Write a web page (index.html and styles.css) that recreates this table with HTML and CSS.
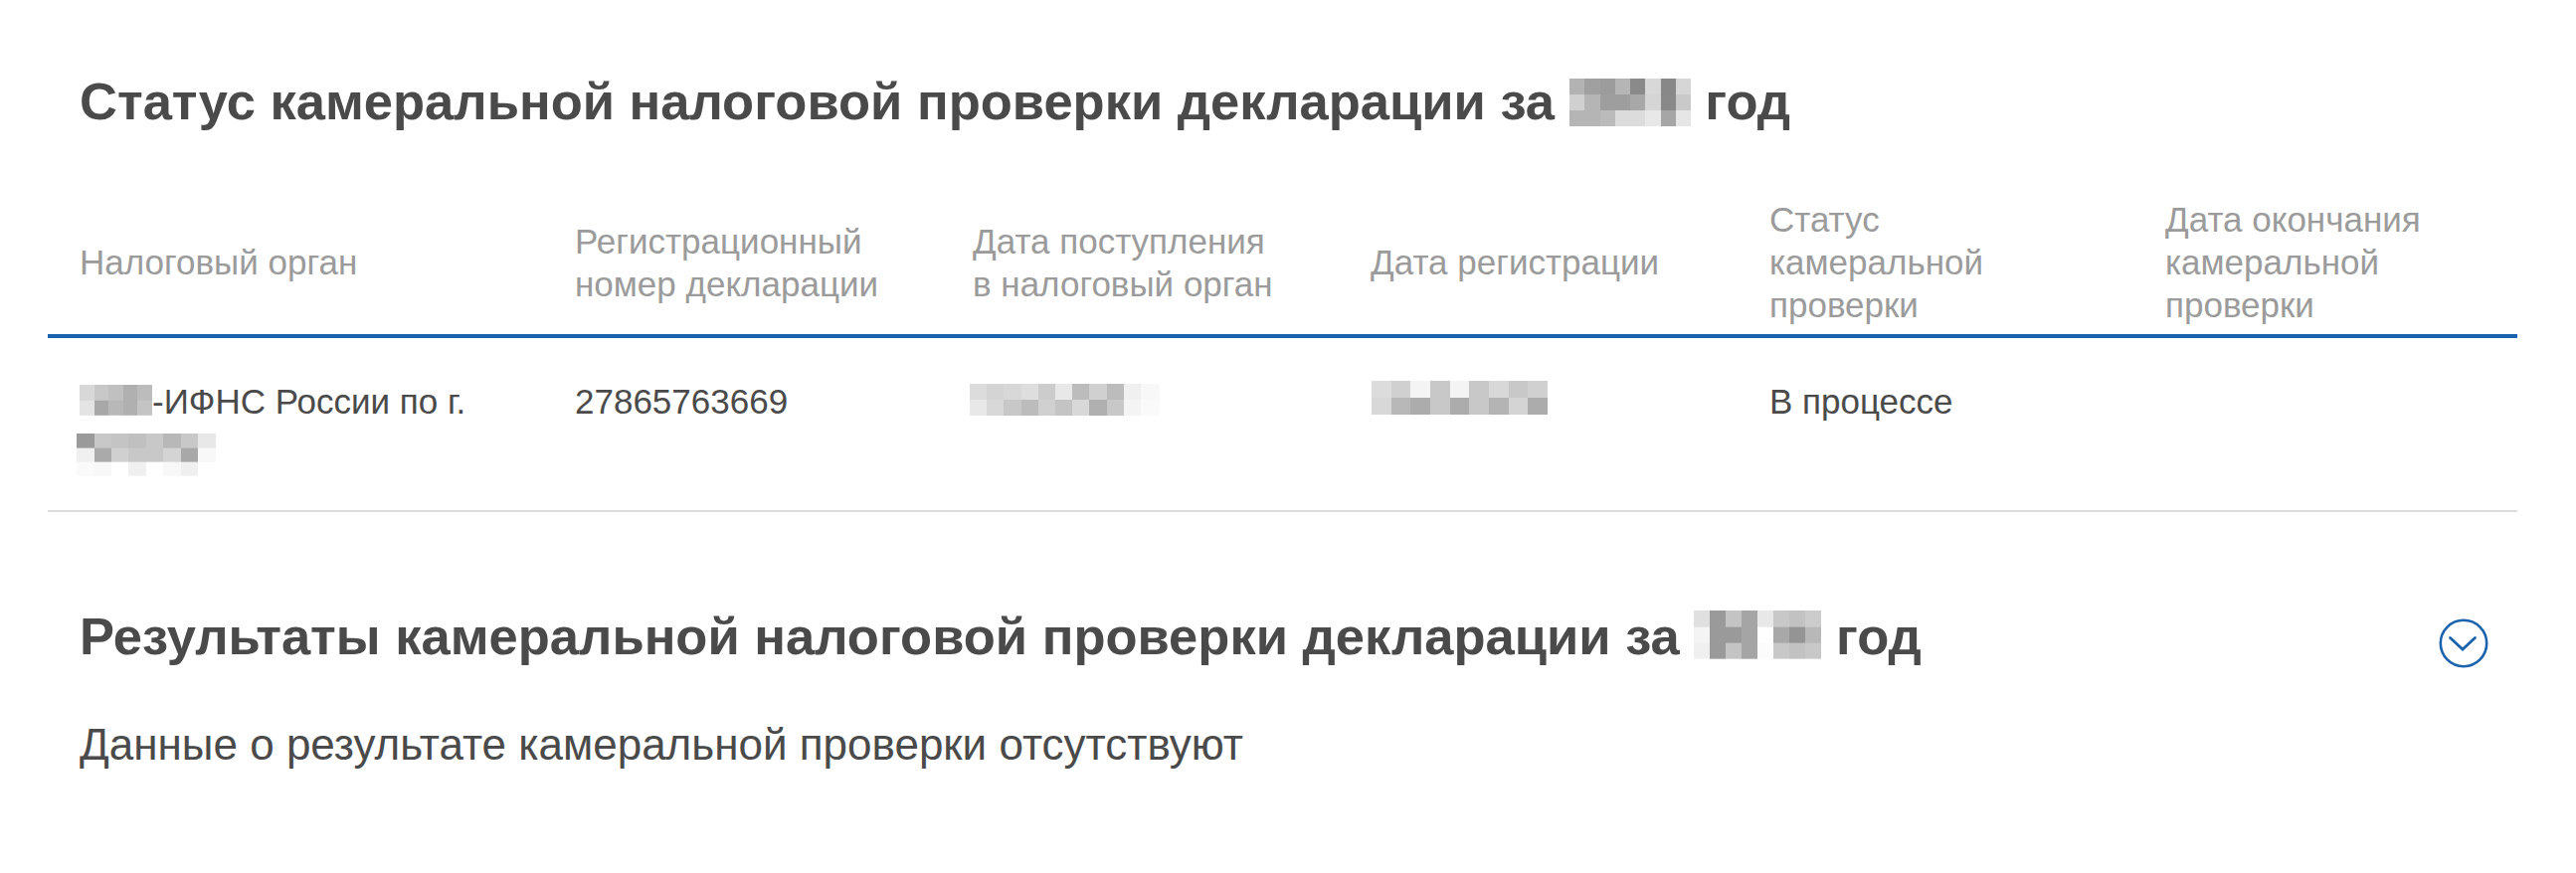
FILE: index.html
```html
<!DOCTYPE html>
<html lang="ru">
<head>
<meta charset="utf-8">
<title>Статус камеральной налоговой проверки</title>
<link rel="stylesheet" href="styles.css">
</head>
<body>
<main class="page">
  <section class="status">
    <h2 class="title">Статус камеральной налоговой проверки декларации за <span class="mosaic m-year1"></span> год</h2>
    <div class="table">
      <div class="row head">
        <div class="cell">Налоговый орган</div>
        <div class="cell">Регистрационный<br>номер декларации</div>
        <div class="cell">Дата поступления<br>в налоговый орган</div>
        <div class="cell">Дата регистрации</div>
        <div class="cell">Статус<br>камеральной<br>проверки</div>
        <div class="cell">Дата окончания<br>камеральной<br>проверки</div>
      </div>
      <div class="row body">
        <div class="cell"><span class="mosaic m-code"></span>-ИФНС России по г. <span class="mosaic m-city"></span></div>
        <div class="cell">27865763669</div>
        <div class="cell"><span class="mosaic m-date1"></span></div>
        <div class="cell"><span class="mosaic m-date2"></span></div>
        <div class="cell">В процессе</div>
        <div class="cell"></div>
      </div>
    </div>
  </section>
  <section class="results">
    <div class="results-head">
      <h2 class="title">Результаты камеральной налоговой проверки декларации за <span class="mosaic m-year2"></span> год</h2>
      <button class="toggle" type="button" aria-label="Развернуть">
        <svg width="50" height="50" viewBox="0 0 50 50" aria-hidden="true">
          <circle cx="25" cy="25" r="23.2" fill="none" stroke="#1b63ae" stroke-width="2.6"/>
          <polyline points="11.5,19.5 24,31 36.5,19.5" fill="none" stroke="#1b63ae" stroke-width="2.8" stroke-linecap="round" stroke-linejoin="miter"/>
        </svg>
      </button>
    </div>
    <p class="desc">Данные о результате камеральной проверки отсутствуют</p>
  </section>
</main>
</body>
</html>
```

FILE: styles.css
```css
html, body {
  margin: 0;
  padding: 0;
  background: #ffffff;
}

body {
  font-family: "Liberation Sans", Arial, Helvetica, sans-serif;
  color: #4a4a4a;
}

.page {
  padding: 70px 59px 0 48px;
}

.title {
  margin: 0;
  padding-left: 32px;
  font-size: 52.5px;
  line-height: 64px;
  font-weight: 700;
  color: #4a4a4a;
}

.table {
  margin-top: 65px;
}

.row {
  display: grid;
  grid-template-columns: 498px 400px 400px 401px 398px 1fr;
}

.row.head {
  align-items: center;
  padding-bottom: 8px;
  border-bottom: 4px solid #1b63ae;
}

.row.head .cell {
  padding: 0 16px 0 32px;
  font-size: 35px;
  line-height: 43px;
  white-space: nowrap;
  color: #9b9b9b;
}

.row.body {
  align-items: start;
  padding: 42px 0 45px;
  border-bottom: 2px solid #dddddd;
}

.row.body .cell {
  padding: 0 32px 0 32px;
  font-size: 35px;
  line-height: 43px;
  color: #4a4a4a;
}

.results {
  margin-top: 93px;
}

.results-head {
  display: flex;
  justify-content: space-between;
  align-items: flex-start;
}

.toggle {
  margin: 14px 29px 0 0;
  padding: 0;
  border: 0;
  background: none;
  width: 50px;
  height: 50px;
  cursor: pointer;
}

.toggle svg {
  display: block;
}

.desc {
  margin: 49px 0 0;
  padding-left: 32px;
  font-size: 44px;
  line-height: 56px;
  color: #4a4a4a;
}

/* pixelated (blurred) personal data */
.mosaic {
  display: inline-block;
  vertical-align: baseline;
  background-repeat: no-repeat;
}

.m-year1 {
  width: 122px;
  height: 48px;
  margin-bottom: -7px;
  background-size: 100% 34%;
  background-position: 0 0, 0 50%, 0 100%;
  background-image:
    linear-gradient(90deg, #b3b3b3 0 12.5%, #a0a0a0 0 25%, #9c9c9c 0 37.5%, #b5b5b5 0 50%, #8a8a8a 0 62.5%, #d8d8d8 0 75%, #888888 0 87.5%, #d6d6d6 0 100%),
    linear-gradient(90deg, #d0d0d0 0 12.5%, #b5b5b5 0 25%, #9e9e9e 0 37.5%, #9e9e9e 0 50%, #a8a8a8 0 62.5%, #d5d5d5 0 75%, #898989 0 87.5%, #c9c9c9 0 100%),
    linear-gradient(90deg, #b5b5b5 0 12.5%, #b5b5b5 0 25%, #bbbbbb 0 37.5%, #dcdcdc 0 50%, #dcdcdc 0 62.5%, #e8e8e8 0 75%, #a6a6a6 0 87.5%, #e6e6e6 0 100%);
}

.m-year2 {
  width: 128px;
  height: 49px;
  margin-bottom: -5px;
  background-size: 100% 34%;
  background-position: 0 0, 0 50%, 0 100%;
  background-image:
    linear-gradient(90deg, #e0e0e0 0 12.5%, #9a9a9a 0 25%, #c4c4c4 0 37.5%, #a5a5a5 0 50%, #e8e8e8 0 62.5%, #c8c8c8 0 75%, #c2c2c2 0 87.5%, #cccccc 0 100%),
    linear-gradient(90deg, #f4f4f4 0 12.5%, #9a9a9a 0 25%, #9a9a9a 0 37.5%, #a5a5a5 0 50%, #ffffff 0 62.5%, #a8a8a8 0 75%, #949494 0 87.5%, #b8b8b8 0 100%),
    linear-gradient(90deg, #f0f0f0 0 12.5%, #9a9a9a 0 25%, #c4c4c4 0 37.5%, #a5a5a5 0 50%, #fcfcfc 0 62.5%, #c8c8c8 0 75%, #c2c2c2 0 87.5%, #c8c8c8 0 100%);
}

.m-code {
  width: 73px;
  height: 31px;
  margin-bottom: -2px;
  background-size: 100% 51%;
  background-position: 0 0, 0 100%;
  background-image:
    linear-gradient(90deg, #d8d8d8 0 20%, #c8c8c8 0 40%, #c0c0c0 0 60%, #b0b0b0 0 80%, #bcbcbc 0 100%),
    linear-gradient(90deg, #e4e4e4 0 20%, #a8a8a8 0 40%, #b8b8b8 0 60%, #b0b0b0 0 80%, #c4c4c4 0 100%);
}

.m-city {
  width: 140px;
  height: 43px;
  margin-left: -3px;
  margin-bottom: -20px;
  background-size: 100% 34%;
  background-position: 0 0, 0 50%, 0 100%;
  background-image:
    linear-gradient(90deg, #9a9a9a 0 12.5%, #c8c8c8 0 25%, #c4c4c4 0 37.5%, #c0c0c0 0 50%, #c8c8c8 0 62.5%, #b8b8b8 0 75%, #c8c8c8 0 87.5%, #e8e8e8 0 100%),
    linear-gradient(90deg, #f0f0f0 0 12.5%, #aaaaaa 0 25%, #d0d0d0 0 37.5%, #c8c8c8 0 50%, #c8c8c8 0 62.5%, #d4d4d4 0 75%, #a8a8a8 0 87.5%, #f8f8f8 0 100%),
    linear-gradient(90deg, #fafafa 0 12.5%, #f8f8f8 0 25%, #ffffff 0 37.5%, #f0f0f0 0 50%, #ffffff 0 62.5%, #f8f8f8 0 75%, #f0f0f0 0 87.5%, #ffffff 0 100%);
}

.m-date1 {
  width: 191px;
  height: 32px;
  margin-left: -3px;
  margin-bottom: -2px;
  background-size: 100% 51%;
  background-position: 0 0, 0 100%;
  background-image:
    linear-gradient(90deg, #dcdcdc 0 9%, #d4d4d4 0 18%, #d8d8d8 0 27%, #dedede 0 36%, #cccccc 0 45%, #e8e8e8 0 54%, #bcbcbc 0 63%, #d0d0d0 0 72%, #bcbcbc 0 81%, #f0f0f0 0 90%, #f8f8f8 0 100%),
    linear-gradient(90deg, #e8e8e8 0 9%, #d8d8d8 0 18%, #c8c8c8 0 27%, #bcbcbc 0 36%, #d0d0d0 0 45%, #c4c4c4 0 54%, #d8d8d8 0 63%, #b0b0b0 0 72%, #c8c8c8 0 81%, #f4f4f4 0 90%, #fafafa 0 100%);
}

.m-date2 {
  width: 177px;
  height: 34px;
  margin-left: 1px;
  margin-bottom: -1px;
  background-size: 100% 51%;
  background-position: 0 0, 0 100%;
  background-image:
    linear-gradient(90deg, #dcdcdc 0 11.1%, #d0d0d0 0 22.2%, #f4f4f4 0 33.3%, #c8c8c8 0 44.4%, #f4f4f4 0 55.5%, #c8c8c8 0 66.6%, #d8d8d8 0 77.7%, #c8c8c8 0 88.8%, #d0d0d0 0 100%),
    linear-gradient(90deg, #d8d8d8 0 11.1%, #b8b8b8 0 22.2%, #acacac 0 33.3%, #c8c8c8 0 44.4%, #acacac 0 55.5%, #c8c8c8 0 66.6%, #b4b4b4 0 77.7%, #d4d4d4 0 88.8%, #acacac 0 100%);
}
```
